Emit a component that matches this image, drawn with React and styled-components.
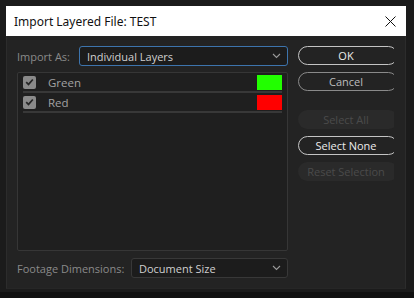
import React from "react";
import styled, { createGlobalStyle } from "styled-components";

const GlobalStyle = createGlobalStyle`
  html, body {
    margin: 0;
    padding: 0;
    background: #1b1b1b;
    width: 414px;
    height: 298px;
    overflow: hidden;
  }
  body {
    font-family: "Open Sans", "Noto Sans", sans-serif;
  }
`;

const Screen = styled.div`
  width: 414px;
  height: 298px;
  padding: 6px 0 0 6px;
  box-sizing: border-box;
  background: linear-gradient(#1b1b1b 0 292px, #111 292px);
`;

const Window = styled.div`
  width: 400px;
  display: flex;
  flex-direction: column;
`;

const TitleBar = styled.div`
  height: 30px;
  background: #fff;
  display: flex;
  align-items: center;
  justify-content: space-between;
  padding: 0 10px 0 8px;
  font-family: "Noto Sans", "Open Sans", sans-serif;
  font-size: 12px;
  color: #111;
`;

const CloseButton = styled.svg`
  width: 11px;
  height: 11px;
`;

const Body = styled.div`
  height: 253px;
  background: #232323;
  border-left: 1px solid #2c2c2c;
  border-right: 1px solid #2c2c2c;
  border-bottom: 1px solid #262626;
  box-sizing: border-box;
  padding: 10px 0 0 10px;
  display: grid;
  grid-template-columns: 271px 96px;
  column-gap: 10px;
  align-items: start;
`;

const LeftColumn = styled.div`
  display: flex;
  flex-direction: column;
`;

const FieldRow = styled.div`
  display: flex;
  align-items: center;
  height: 20px;
  margin-top: ${(p) => p.$top || 0}px;
`;

const Label = styled.span`
  font-size: 11px;
  color: #8a8a8a;
  width: ${(p) => p.$width}px;
  flex: none;
`;

const Select = styled.div`
  flex: 1;
  height: 20px;
  box-sizing: border-box;
  border: 1px solid ${(p) => (p.$focused ? "#3d74ad" : "#383838")};
  border-radius: 3px;
  background: #1c1c1c;
  display: flex;
  align-items: center;
  justify-content: space-between;
  padding: 0 6px 0 7px;
  font-size: 11px;
  color: #d0d0d0;
`;

const Chevron = styled.svg`
  width: 9px;
  height: 6px;
`;

const List = styled.div`
  margin-top: 6px;
  height: 179px;
  box-sizing: border-box;
  border: 1px solid #363636;
  border-radius: 2px;
  background: #1f1f1f;
`;

const LayerRow = styled.div`
  display: flex;
  align-items: center;
  height: 18px;
  margin: 0 5px;
  border-bottom: 2px solid #383838;
`;

const Checkbox = styled.div`
  width: 13px;
  height: 13px;
  border-radius: 2px;
  background: #8a8a8a;
  display: flex;
  align-items: center;
  justify-content: center;
  flex: none;
`;

const LayerName = styled.span`
  margin-left: 12px;
  flex: 1;
  font-size: 11.5px;
  color: #a2a2a2;
`;

const Swatch = styled.div`
  width: 25px;
  height: 15px;
  background: ${(p) => p.$color};
`;

const ButtonColumn = styled.div`
  display: flex;
  flex-direction: column;
  overflow: hidden;
  width: 96px;
`;

const Button = styled.div`
  width: 100px;
  height: 19px;
  box-sizing: border-box;
  border-radius: 10px;
  margin-top: ${(p) => p.$top || 0}px;
  display: flex;
  align-items: center;
  justify-content: center;
  padding-right: 4px;
  font-size: 11px;
  border: 1px solid
    ${(p) => (p.$disabled ? "transparent" : p.$primary ? "#c4c4c4" : "#8a8a8a")};
  background: ${(p) => (p.$disabled ? "#2a2a2a" : "transparent")};
  color: ${(p) => (p.$disabled ? "#4a4a4a" : p.$primary ? "#ececec" : "#bdbdbd")};
`;

const layers = [
  { name: "Green", color: "#22ff00" },
  { name: "Red", color: "#ff0000" },
];

const CheckIcon = () => (
  <svg width="9" height="8" viewBox="0 0 9 8">
    <path d="M1.2 4.2 L3.5 6.4 L7.8 1.5" fill="none" stroke="#262626" strokeWidth="1.7" />
  </svg>
);

const DownArrow = () => (
  <Chevron viewBox="0 0 9 6">
    <path d="M1 1 L4.5 4.5 L8 1" fill="none" stroke="#9a9a9a" strokeWidth="1.1" />
  </Chevron>
);

export default function App() {
  return (
    <>
      <GlobalStyle />
      <Screen>
        <Window>
          <TitleBar>
            <span>Import Layered File: TEST</span>
            <CloseButton viewBox="0 0 11 11">
              <path d="M0.5 0.5 L10.5 10.5 M10.5 0.5 L0.5 10.5" stroke="#111" strokeWidth="1" />
            </CloseButton>
          </TitleBar>
          <Body>
            <LeftColumn>
              <FieldRow>
                <Label $width={62}>Import As:</Label>
                <Select $focused>
                  <span>Individual Layers</span>
                  <DownArrow />
                </Select>
              </FieldRow>
              <List>
                {layers.map((l) => (
                  <LayerRow key={l.name}>
                    <Checkbox>
                      <CheckIcon />
                    </Checkbox>
                    <LayerName>{l.name}</LayerName>
                    <Swatch $color={l.color} />
                  </LayerRow>
                ))}
              </List>
              <FieldRow $top={7}>
                <Label $width={114}>Footage Dimensions:</Label>
                <Select>
                  <span>Document Size</span>
                  <DownArrow />
                </Select>
              </FieldRow>
            </LeftColumn>
            <ButtonColumn>
              <Button $primary>OK</Button>
              <Button $top={7}>Cancel</Button>
              <Button $top={19} $disabled>Select All</Button>
              <Button $top={7} $primary>Select None</Button>
              <Button $top={7} $disabled>Reset Selection</Button>
            </ButtonColumn>
          </Body>
        </Window>
      </Screen>
    </>
  );
}
